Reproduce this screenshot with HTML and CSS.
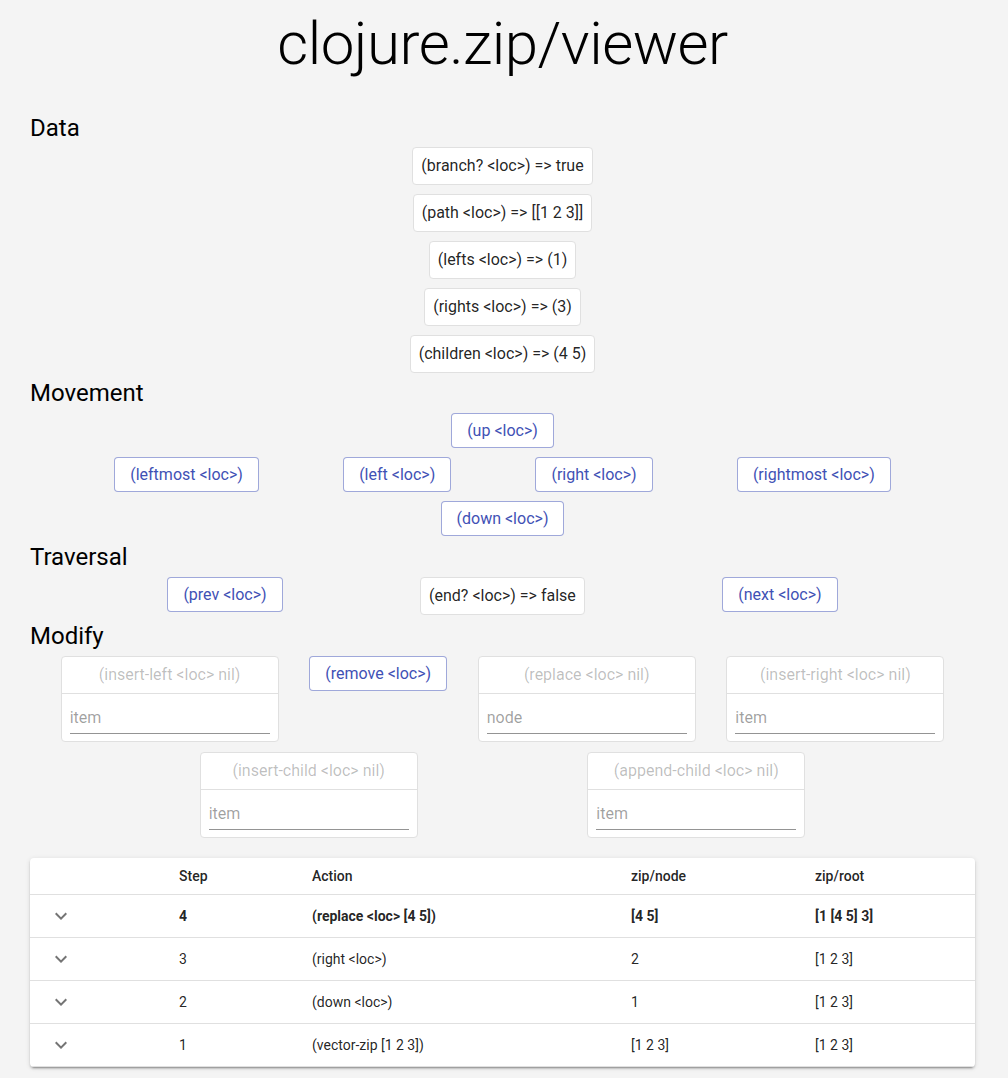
FILE: index.html
```html
<!DOCTYPE html>
<html>
<head>
<meta charset="utf-8">
<title>clojure.zip/viewer</title>
<link rel="stylesheet" href="styles.css">
</head>
<body>
<div class="page">
  <h1 class="title">clojure.zip/viewer</h1>

  <h2 class="section">Data</h2>
  <div class="data-list">
    <div class="data-box">(branch? &lt;loc&gt;) =&gt; true</div>
    <div class="data-box">(path &lt;loc&gt;) =&gt; [[1 2 3]]</div>
    <div class="data-box">(lefts &lt;loc&gt;) =&gt; (1)</div>
    <div class="data-box">(rights &lt;loc&gt;) =&gt; (3)</div>
    <div class="data-box">(children &lt;loc&gt;) =&gt; (4 5)</div>
  </div>

  <h2 class="section">Movement</h2>
  <div class="movement">
    <div class="row-center"><button class="btn">(up &lt;loc&gt;)</button></div>
    <div class="row-even">
      <button class="btn">(leftmost &lt;loc&gt;)</button>
      <button class="btn">(left &lt;loc&gt;)</button>
      <button class="btn">(right &lt;loc&gt;)</button>
      <button class="btn">(rightmost &lt;loc&gt;)</button>
    </div>
    <div class="row-center"><button class="btn">(down &lt;loc&gt;)</button></div>
  </div>

  <h2 class="section">Traversal</h2>
  <div class="row-even traversal">
    <button class="btn">(prev &lt;loc&gt;)</button>
    <div class="data-box">(end? &lt;loc&gt;) =&gt; false</div>
    <button class="btn">(next &lt;loc&gt;)</button>
  </div>

  <h2 class="section">Modify</h2>
  <div class="modify">
    <div class="row-even">
      <div class="card">
        <div class="card-head">(insert-left &lt;loc&gt; nil)</div>
        <div class="card-body"><input class="field" placeholder="item"></div>
      </div>
      <button class="btn">(remove &lt;loc&gt;)</button>
      <div class="card">
        <div class="card-head">(replace &lt;loc&gt; nil)</div>
        <div class="card-body"><input class="field" placeholder="node"></div>
      </div>
      <div class="card">
        <div class="card-head">(insert-right &lt;loc&gt; nil)</div>
        <div class="card-body"><input class="field" placeholder="item"></div>
      </div>
    </div>
    <div class="row-even">
      <div class="card">
        <div class="card-head">(insert-child &lt;loc&gt; nil)</div>
        <div class="card-body"><input class="field" placeholder="item"></div>
      </div>
      <div class="card">
        <div class="card-head">(append-child &lt;loc&gt; nil)</div>
        <div class="card-body"><input class="field" placeholder="item"></div>
      </div>
    </div>
  </div>

  <div class="paper">
    <table class="history">
      <colgroup>
        <col class="c-icon"><col class="c-step"><col class="c-action"><col class="c-node"><col class="c-root">
      </colgroup>
      <thead>
        <tr><th></th><th>Step</th><th>Action</th><th>zip/node</th><th>zip/root</th></tr>
      </thead>
      <tbody>
        <tr class="current">
          <td><span class="icon-btn"><svg viewBox="0 0 24 24" width="24" height="24"><path d="M16.59 8.59 12 13.17 7.41 8.59 6 10l6 6 6-6z"/></svg></span></td>
          <td>4</td><td>(replace &lt;loc&gt; [4 5])</td><td>[4 5]</td><td>[1 [4 5] 3]</td>
        </tr>
        <tr>
          <td><span class="icon-btn"><svg viewBox="0 0 24 24" width="24" height="24"><path d="M16.59 8.59 12 13.17 7.41 8.59 6 10l6 6 6-6z"/></svg></span></td>
          <td>3</td><td>(right &lt;loc&gt;)</td><td>2</td><td>[1 2 3]</td>
        </tr>
        <tr>
          <td><span class="icon-btn"><svg viewBox="0 0 24 24" width="24" height="24"><path d="M16.59 8.59 12 13.17 7.41 8.59 6 10l6 6 6-6z"/></svg></span></td>
          <td>2</td><td>(down &lt;loc&gt;)</td><td>1</td><td>[1 2 3]</td>
        </tr>
        <tr>
          <td><span class="icon-btn"><svg viewBox="0 0 24 24" width="24" height="24"><path d="M16.59 8.59 12 13.17 7.41 8.59 6 10l6 6 6-6z"/></svg></span></td>
          <td>1</td><td>(vector-zip [1 2 3])</td><td>[1 2 3]</td><td>[1 2 3]</td>
        </tr>
      </tbody>
    </table>
  </div>
</div>
</body>
</html>
```

FILE: styles.css
```css
html, body {
  margin: 0;
  padding: 0;
  background: #f4f4f4;
}
body {
  font-family: Roboto, "Liberation Sans", Arial, sans-serif;
  color: rgba(0, 0, 0, 0.87);
  font-size: 16px;
}
.page {
  padding: 8px 33px 12px 30px;
}
.title {
  margin: 0;
  font-size: 60px;
  font-weight: 300;
  line-height: 72px;
  text-align: center;
  color: #000;
  letter-spacing: -0.5px;
}
.section {
  margin: 0;
  font-size: 24px;
  font-weight: 400;
  line-height: 32px;
  color: #000;
}
.title + .section {
  margin-top: 32px;
}
.data-list {
  display: flex;
  flex-direction: column;
  align-items: center;
  gap: 9px;
  padding: 3px 0 4px;
}
.data-box {
  background: #fff;
  border: 1px solid #e0e0e0;
  border-radius: 4px;
  padding: 6px 8px;
  line-height: 24px;
  font-size: 16px;
  white-space: nowrap;
}
.btn {
  font-family: inherit;
  font-size: 16px;
  line-height: 23px;
  padding: 5px 15px;
  background: #fff;
  color: #3f51b5;
  border: 1px solid rgba(63, 81, 181, 0.5);
  border-radius: 4px;
  cursor: pointer;
  white-space: nowrap;
}
.movement {
  display: flex;
  flex-direction: column;
  gap: 9px;
  padding: 4px 0 5px;
}
.row-center {
  display: flex;
  justify-content: center;
}
.row-even {
  display: flex;
  justify-content: space-evenly;
  align-items: flex-start;
}
.traversal {
  padding: 4px 0 5px;
}
.modify {
  display: flex;
  flex-direction: column;
  gap: 10px;
  padding-top: 4px;
}
.card {
  width: 216px;
  background: #fff;
  border: 1px solid #e0e0e0;
  border-radius: 4px;
}
.card-head {
  padding: 6px 8px;
  line-height: 24px;
  text-align: center;
  color: rgba(0, 0, 0, 0.26);
  border-bottom: 1px solid #e0e0e0;
  white-space: nowrap;
}
.card-body {
  padding: 7px 8px 7px;
}
.field {
  display: block;
  width: 100%;
  box-sizing: border-box;
  font-family: inherit;
  font-size: 16px;
  line-height: 23px;
  height: 33px;
  padding: 5px 0 4px;
  border: none;
  border-bottom: 1px solid rgba(0, 0, 0, 0.42);
  background: transparent;
  outline: none;
  color: rgba(0, 0, 0, 0.87);
}
.field::placeholder {
  color: rgba(0, 0, 0, 0.38);
  opacity: 1;
}
.paper {
  margin-top: 20px;
  background: #fff;
  border-radius: 4px;
  box-shadow: 0px 3px 1px -2px rgba(0,0,0,0.2), 0px 2px 2px 0px rgba(0,0,0,0.14), 0px 1px 5px 0px rgba(0,0,0,0.12);
  overflow: hidden;
}
.history {
  width: 100%;
  border-collapse: collapse;
  table-layout: fixed;
  font-size: 14px;
}
.c-icon { width: 133px; }
.c-step { width: 133px; }
.c-action { width: 319px; }
.c-node { width: 184px; }
.history th,
.history td {
  text-align: left;
  padding: 6px 24px 6px 16px;
  border-bottom: 1px solid #e0e0e0;
  vertical-align: middle;
}
.history th {
  font-weight: 500;
  line-height: 24px;
}
.history td {
  line-height: 20px;
  height: 30px;
}
.history tr.current td {
  font-weight: 700;
}
.icon-btn {
  display: inline-flex;
  padding: 3px;
  fill: rgba(0, 0, 0, 0.54);
  vertical-align: middle;
}
.icon-btn svg {
  display: block;
}
```
